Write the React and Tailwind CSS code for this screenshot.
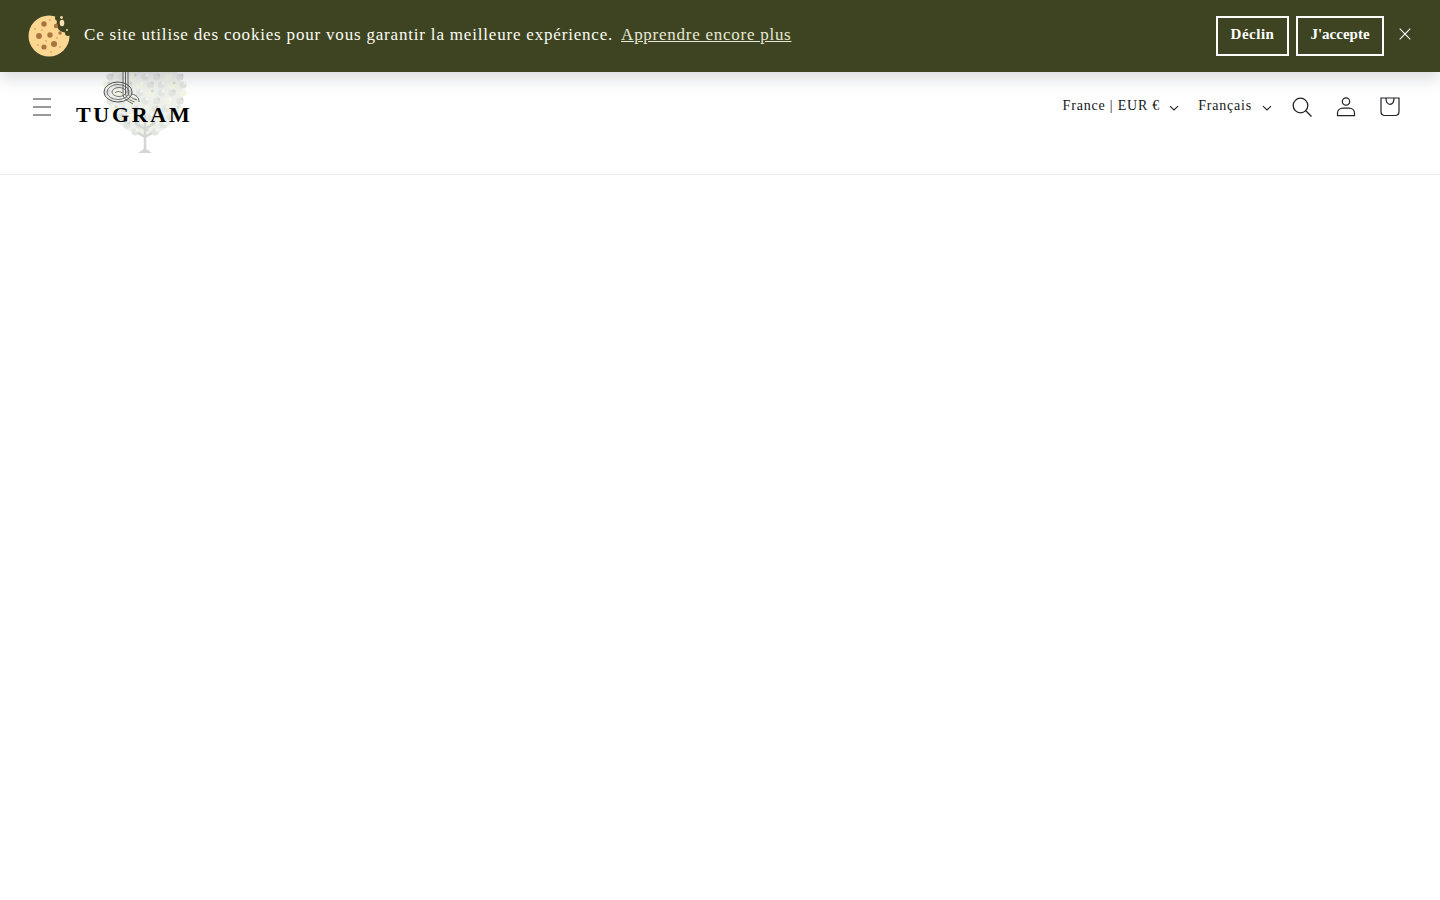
import React from "react";

const serif = "font-['Liberation_Serif',serif]";

// rows of the tree crown: [y, half width]
const crown = [[6, 22], [14, 30], [22, 35], [30, 38], [38, 38], [46, 35], [54, 31], [62, 25], [70, 18], [77, 10]];

function CookieIcon() {
  return (
    <svg width="44" height="44" viewBox="0 0 44 44" aria-hidden>
      <circle cx="22" cy="22" r="20.500" fill="#fcd792" />
      <circle cx="38" cy="10" r="8.500" fill="#3e4421" />
      <circle cx="31" cy="4" r="3" fill="#3e4421" />
      <circle cx="41" cy="19" r="3" fill="#3e4421" />
      {[[17, 10, 2.700], [12, 22, 2.900], [23, 21, 2.700], [27, 30, 3], [17, 33, 2.600], [29, 12, 2.200], [33, 19, 1.700]].map(([cx, cy, r], i) => (
        <circle key={i} cx={cx} cy={cy} r={r} fill="#a9753f" />
      ))}
      {[[8, 15], [15, 16], [19, 27], [30, 24], [24, 38], [11, 31], [33, 33], [23, 6]].map(([cx, cy], i) => (
        <circle key={i} cx={cx} cy={cy} r="0.800" fill="#c69257" />
      ))}
      <ellipse cx="35" cy="9" rx="2.300" ry="3.200" fill="#f6dfb2" />
      <circle cx="34.500" cy="3.500" r="1.400" fill="#f4d9a6" />
      <circle cx="40" cy="16" r="1" fill="#f4d9a6" />
    </svg>
  );
}

function TreeLogo() {
  return (
    <svg width="90" height="100" viewBox="0 0 90 100" aria-hidden>
      <ellipse cx="45" cy="38" rx="38" ry="42" fill="#eef0ec" />
      {crown.map(([y, w]) =>
        Array.from({ length: Math.round((w * 2) / 11) + 1 }).map((_, i) => {
          const x = 45 - w + (i * (w * 2)) / Math.max(1, Math.round((w * 2) / 11));
          return (
            <g key={`${y}-${i}`}>
              <circle cx={x} cy={y} r="3.600" fill={(i + y) % 3 === 0 ? "#f3f5e2" : "#e2e6e0"} />
              <circle cx={x + 2} cy={y - 2} r="1.500" fill={(i + y) % 2 === 0 ? "#d6dbd6" : "#f7f8f1"} />
            </g>
          );
        })
      )}
      <path d="M45 60v36M45 74l-10-6M45 74l10-6M45 82l-7-4M45 82l7-4" stroke="#d3d6d4" strokeWidth="2.500" fill="none" />
      <path d="M38 98h14l-7-5z" fill="#d3d6d4" />
    </svg>
  );
}

function Tugra() {
  return (
    <svg width="40" height="40" viewBox="0 0 40 40" fill="none" stroke="#555" aria-hidden>
      <ellipse cx="15" cy="24" rx="14" ry="10" strokeWidth="1" />
      <ellipse cx="15" cy="24" rx="11" ry="7.500" strokeWidth="0.800" />
      <ellipse cx="16" cy="24" rx="7" ry="4.500" strokeWidth="0.800" />
      <path d="M12 25c2-2 5-2 7 0M20 0v26c0 5 5 7 10 10M22.500 0v25c0 5 4 7 9 9M25 4v20c0 4 3 6 9 8" strokeWidth="0.900" />
      <path d="M29 26c4 1 7 3 7 8" strokeWidth="0.900" />
    </svg>
  );
}

function Chevron() {
  return (
    <svg width="10" height="6" viewBox="0 0 10 6" fill="none" stroke="#1f2226" strokeWidth="1.100" aria-hidden>
      <path d="M1 1.200l4 3.800 4-3.800" />
    </svg>
  );
}

function IconButton({ children }) {
  return <button className="w-11 h-11 flex items-center justify-center text-[#1f2226]">{children}</button>;
}

export default function App() {
  return (
    <div className={`relative min-h-[900px] bg-white ${serif}`}>
      {/* cookie bar sits over the header */}
      <div className="absolute top-0 left-0 w-full h-[72px] z-10 bg-[#3e4421] shadow-[0_6px_16px_rgba(40,45,70,0.18)] flex items-center pl-[27px] pr-[28px] text-white">
        <CookieIcon />
        <p className="ml-[13px] -mt-[3px] text-[17px] tracking-[0.81px] text-[#fbfbf4]">Ce site utilise des cookies pour vous garantir la meilleure expérience.</p>
        <a href="#" className="ml-[8px] -mt-[3px] text-[17px] tracking-[0.74px] underline text-[#e6e8d4]">Apprendre encore plus</a>
        <button className="ml-auto w-[73px] h-[40px] border-2 border-white text-[15px] font-bold tracking-[0.5px] pb-[3px]">Déclin</button>
        <button className="ml-[7px] w-[88px] h-[40px] border-2 border-white text-[15px] font-bold tracking-[0px] pb-[3px]">J'accepte</button>
        <button className="ml-[14px] -mt-[4px] w-[14px] h-[14px] flex items-center justify-center">
          <svg width="12" height="12" viewBox="0 0 12 12" fill="none" stroke="#fff" strokeWidth="1.100" aria-hidden>
            <path d="M.7.700l10.600 10.600M11.300.700L.7 11.300" />
          </svg>
        </button>
      </div>

      <header className="h-[175px] border-b border-[#ececec] flex items-start pt-[85px] pl-[20px] pr-[28px]">
        <IconButton>
          <svg width="20" height="18" viewBox="0 0 20 18" fill="none" stroke="#333" strokeWidth="1.100" aria-hidden>
            <path d="M1 1h18M1 9h18M1 17h18" />
          </svg>
        </IconButton>
        <div className="relative ml-[12px] -mt-[30px] w-[116px] h-[100px] pl-[24px]">
          <TreeLogo />
          <div className="absolute left-[27px] top-[13px]"><Tugra /></div>
          <div className="absolute left-0 top-[47px] text-[22px] leading-[26px] font-bold tracking-[2.7px] text-black whitespace-nowrap">TUGRAM</div>
        </div>

        <div className="ml-auto flex items-start text-[14px] text-[#15181c] tracking-[0.8px]">
          <button className="flex items-center h-[40px] mr-[19px]">
            France | EUR €
            <span className="ml-[9px] mt-[5px]"><Chevron /></span>
          </button>
          <button className="flex items-center h-[40px] mr-[8px]">
            Français
            <span className="ml-[10px] mt-[5px]"><Chevron /></span>
          </button>
          <IconButton>
            <svg width="20" height="20" viewBox="0 0 20 20" fill="none" stroke="#1f2226" strokeWidth="1.300" aria-hidden>
              <circle cx="8.500" cy="8.500" r="7.300" />
              <path d="M13.800 13.800L19.500 19.500" />
            </svg>
          </IconButton>
          <IconButton>
            <svg width="20" height="20" viewBox="0 0 20 20" fill="none" stroke="#1f2226" strokeWidth="1.200" aria-hidden>
              <circle cx="10" cy="4.500" r="3.700" />
              <path d="M1.500 18.700h17v-2.500c0-3-2.500-5-5.500-5h-6c-3 0-5.500 2-5.500 5z" />
            </svg>
          </IconButton>
          <IconButton>
            <svg width="20" height="20" viewBox="0 0 20 20" fill="none" stroke="#1f2226" strokeWidth="1.200" aria-hidden>
              <path d="M1 1h18v13.500c0 2.500-1.500 4-4 4H5c-2.500 0-4-1.500-4-4z" />
              <path d="M6 1c0 4.300 1.500 6.300 4 6.300s4-2 4-6.300" />
            </svg>
          </IconButton>
        </div>
      </header>
    </div>
  );
}
